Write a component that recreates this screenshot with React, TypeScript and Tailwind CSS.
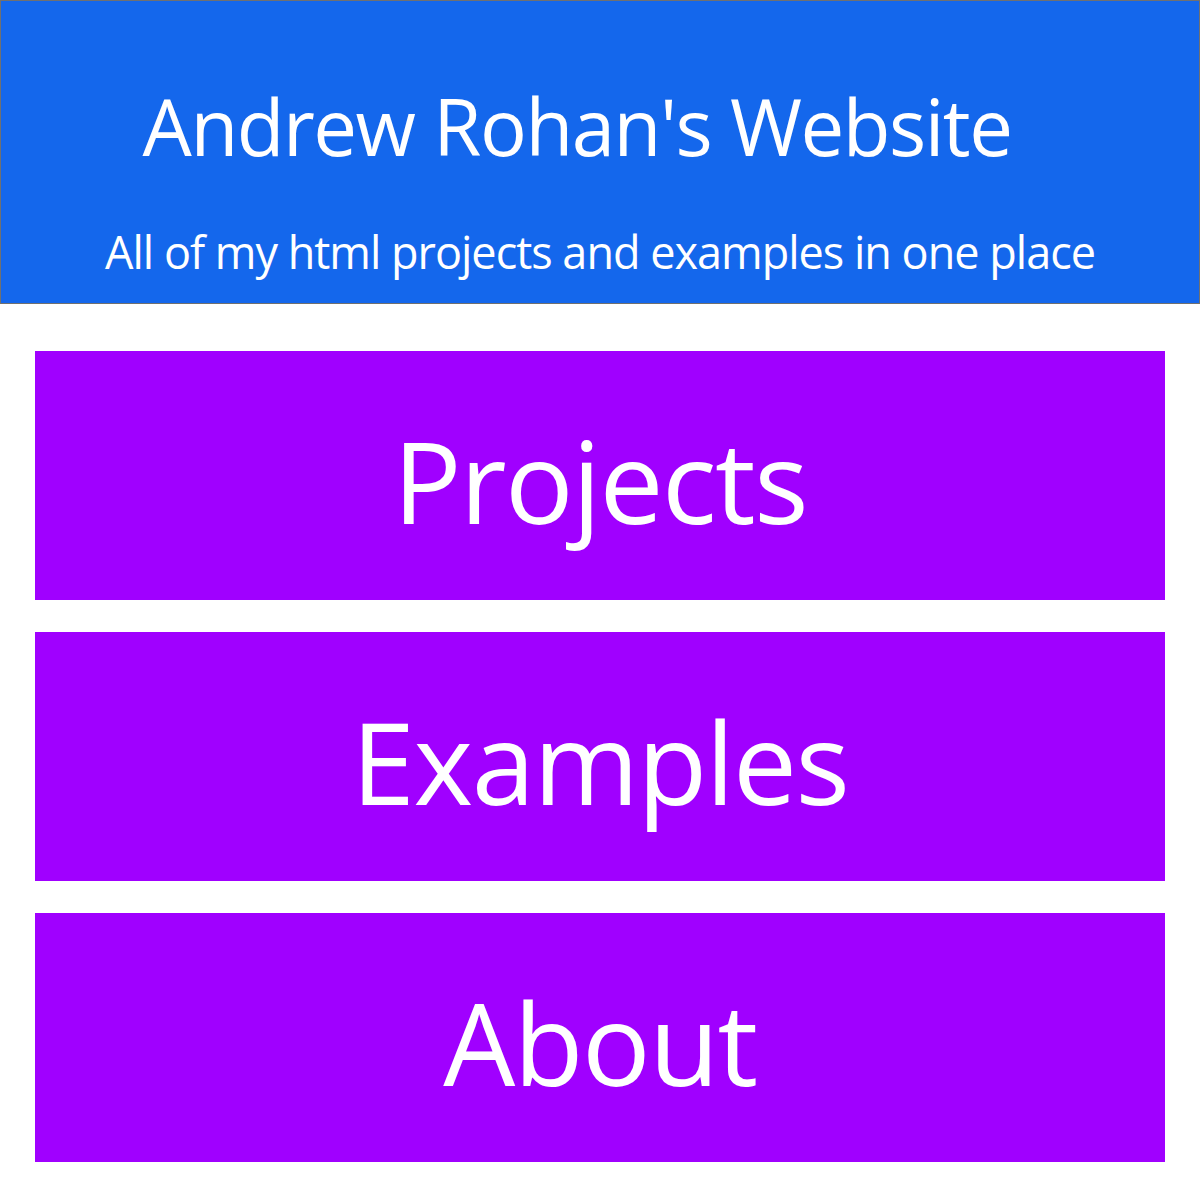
const LINKS = ["Projects", "Examples", "About"];

export default function App() {
  return (
    <div className="min-h-[1200px] bg-white" style={{ fontFamily: '"Open Sans", "Noto Sans", sans-serif' }}>
      <header className="flex h-[304px] flex-col items-center border border-[#707070] bg-[#1467ec] pt-[86px] text-white">
        <h1 className="pr-[46px] text-[78px] leading-none tracking-[-1.5px]">Andrew Rohan's Website</h1>
        <p className="mt-[64px] text-[45px] leading-none tracking-[-1px]">All of my html projects and examples in one place</p>
      </header>
      <nav className="flex flex-col gap-[32px] px-[35px] pt-[47px]">
        {LINKS.map(label => (
          <a
            key={label}
            href="#"
            className="flex h-[249px] items-center justify-center bg-[#a000ff] pt-[8px] text-[114px] leading-none tracking-[-1.5px] text-white"
          >
            {label}
          </a>
        ))}
      </nav>
    </div>
  );
}
